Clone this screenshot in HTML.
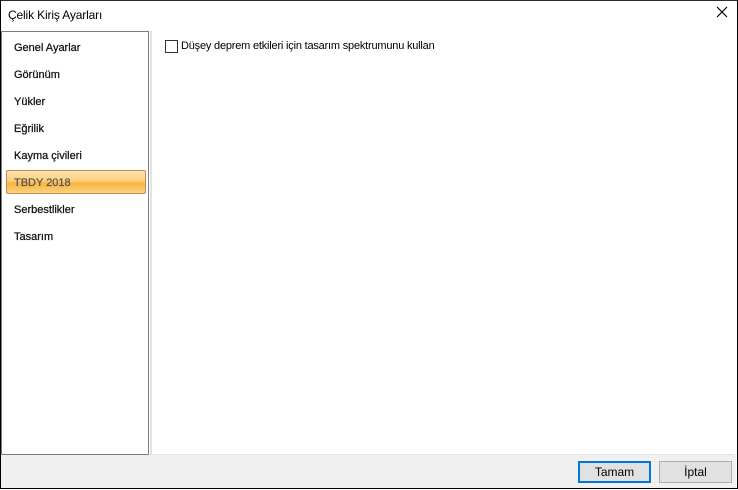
<!DOCTYPE html><html><head><style>
body{margin:0;width:738px;height:490px;background:#fff;font-family:"Liberation Sans",sans-serif;font-size:12px;overflow:hidden;position:relative}
.win{position:absolute;left:0;top:0;border-left:1px solid #000;border-right:1px solid #000;border-bottom:1px solid #000;border-top:1px solid #2b2b2b;box-sizing:border-box;width:738px;height:489px}
.title{position:absolute;left:8px;top:8px;font-size:12px;color:#000;letter-spacing:-0.15px}
.x{position:absolute;left:716px;top:6px}
.left{position:absolute;left:1px;top:31px;width:148px;height:424px;border:1px solid #7c7c84;box-sizing:border-box;background:#fff}
.right{position:absolute;left:150px;top:31px;width:585px;height:424px;border-left:2px solid #e3e3e3;border-bottom:1px solid #e3e3e3;box-sizing:border-box}
.item{position:absolute;left:12px;color:#111;font-size:11px;-webkit-text-stroke:0.25px #111}
.sel{position:absolute;left:4px;top:138px;width:140px;height:24px;border:1px solid #c09050;border-radius:2px;box-sizing:border-box;background:linear-gradient(#fde4b0,#fbcf7c 45%,#f8b440 55%,#fbd27e)}
.bottom{position:absolute;left:1px;top:455px;width:735px;height:33px;background:#f0f0f0}
.btn{position:absolute;top:461px;width:73px;height:22px;box-sizing:border-box;background:#e1e1e1;border:1px solid #adadad;text-align:center;line-height:20px;font-size:12px}
</style></head><body>
<div class="win"></div>
<div class="title">Çelik Kiriş Ayarları</div>
<svg class="x" width="12" height="12" viewBox="0 0 12 12"><path d="M1 1L11 11M11 1L1 11" stroke="#000" stroke-width="1.2"/></svg>
<div class="left">
<div class="sel"></div>
<div class="item" style="top:10px">Genel Ayarlar</div>
<div class="item" style="top:37px">Görünüm</div>
<div class="item" style="top:64px">Yükler</div>
<div class="item" style="top:91px">Eğrilik</div>
<div class="item" style="top:118px">Kayma çivileri</div>
<div class="item" style="top:145px;color:#555;-webkit-text-stroke:0.25px #555">TBDY 2018</div>
<div class="item" style="top:172px">Serbestlikler</div>
<div class="item" style="top:199px">Tasarım</div>
</div>
<div class="right"></div>
<div style="position:absolute;left:165px;top:40px;width:13px;height:13px;border:1px solid #333;box-sizing:border-box;background:#fff"></div>
<div style="position:absolute;left:181px;top:40px;font-size:11px;letter-spacing:-0.2px">Düşey deprem etkileri için tasarım spektrumunu kullan</div>
<div class="bottom"></div>
<div class="btn" style="left:578px;border:2px solid #0078d7;line-height:18px">Tamam</div>
<div class="btn" style="left:659px">İptal</div>
</body></html>
